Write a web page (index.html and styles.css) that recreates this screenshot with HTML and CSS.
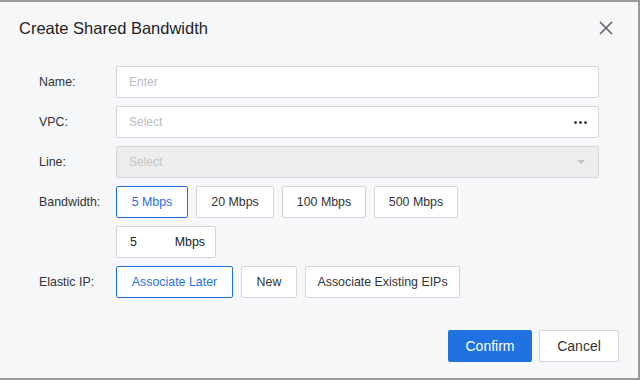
FILE: index.html
```html
<!DOCTYPE html>
<html lang="en">
<head>
    <meta charset="UTF-8">
    <title>Create Shared Bandwidth</title>
    <link rel="stylesheet" href="styles.css">
</head>
<body>
<div class="dialog">
    <div class="dialog-header">
        <h2>Create Shared Bandwidth</h2>
        <button class="close" aria-label="Close">
            <svg width="14" height="14" viewBox="0 0 14 14">
                <path d="M1 1L13 13M13 1L1 13" stroke="#5f6368" stroke-width="1.6" fill="none"/>
            </svg>
        </button>
    </div>

    <div class="form">
        <div class="row">
            <label class="label">Name:</label>
            <div class="field"><input class="input" placeholder="Enter"></div>
        </div>
        <div class="row">
            <label class="label">VPC:</label>
            <div class="field select">
                <span class="placeholder">Select</span>
                <span class="dots"><i></i><i></i><i></i></span>
            </div>
        </div>
        <div class="row">
            <label class="label">Line:</label>
            <div class="field select disabled">
                <span class="placeholder">Select</span>
                <span class="caret"></span>
            </div>
        </div>
        <div class="row">
            <label class="label">Bandwidth:</label>
            <div class="options">
                <button class="opt active w72">5 Mbps</button>
                <button class="opt w78">20 Mbps</button>
                <button class="opt w84">100 Mbps</button>
                <button class="opt w84">500 Mbps</button>
            </div>
        </div>
        <div class="row">
            <span class="label"></span>
            <div class="custom">
                <span>5</span>
                <span>Mbps</span>
            </div>
        </div>
        <div class="row">
            <label class="label">Elastic IP:</label>
            <div class="options">
                <button class="opt active w117">Associate Later</button>
                <button class="opt w56">New</button>
                <button class="opt w155">Associate Existing EIPs</button>
            </div>
        </div>
    </div>

    <div class="dialog-footer">
        <button class="btn primary">Confirm</button>
        <button class="btn">Cancel</button>
    </div>
</div>
</body>
</html>
```

FILE: styles.css
```css
body {
    margin: 0;
    background: #9a9a9a;
    font-family: "Liberation Sans", Arial, sans-serif;
    color: #333;
}

.dialog {
    box-sizing: border-box;
    width: 638px;
    height: 376px;
    margin: 2px 0 0 0;
    background: #f6f7f9;
}

.dialog-header {
    display: flex;
    justify-content: space-between;
    align-items: center;
    padding: 15px 25px 0 19px;
    height: 22px;
}
.dialog-header h2 {
    margin: 0;
    font-size: 16.5px;
    font-weight: 400;
    color: #1f1f1f;
}
.close {
    border: 0;
    background: none;
    padding: 0;
    width: 14px;
    height: 14px;
    display: flex;
}

.form {
    display: flex;
    flex-direction: column;
    gap: 8px;
    padding: 27px 39px 0 39px;
}

.row {
    display: flex;
    align-items: center;
    height: 32px;
}
.label {
    width: 77px;
    font-size: 12.4px;
    color: #333;
}

.field {
    box-sizing: border-box;
    width: 483px;
    height: 32px;
    border: 1px solid #d3d6dc;
    border-radius: 2px;
    background: #fff;
}
.input {
    box-sizing: border-box;
    width: 100%;
    height: 100%;
    border: 0;
    background: none;
    padding: 0 12px;
    font: 12px "Liberation Sans", Arial, sans-serif;
    outline: none;
}
.input::placeholder, .placeholder {
    color: #b9bcc2;
}
.select {
    display: flex;
    align-items: center;
    justify-content: space-between;
    padding: 0 11px 0 12px;
    font-size: 12px;
}
.select.disabled {
    background: #ededed;
}
.select.disabled .placeholder {
    color: #c4c6ca;
}
.dots {
    display: flex;
    gap: 2px;
}
.dots i {
    width: 3px;
    height: 3px;
    border-radius: 50%;
    background: #3e4654;
}
.caret {
    width: 0;
    height: 0;
    margin-right: 2px;
    border-left: 4px solid transparent;
    border-right: 4px solid transparent;
    border-top: 4px solid #bfc2c7;
}

.options {
    display: flex;
    gap: 8px;
}
.opt {
    box-sizing: border-box;
    height: 32px;
    padding: 0;
    border: 1px solid #d3d6dc;
    border-radius: 2px;
    background: #fff;
    font: 12.4px "Liberation Sans", Arial, sans-serif;
    color: #333;
}
.opt.active {
    border-color: #1f6fe0;
    color: #1f6fe0;
}
.w56 { width: 56px; }
.w72 { width: 72px; }
.w78 { width: 78px; }
.w84 { width: 84px; }
.w117 { width: 117px; }
.w155 { width: 155px; }

.custom {
    box-sizing: border-box;
    display: flex;
    justify-content: space-between;
    align-items: center;
    width: 100px;
    height: 32px;
    padding: 0 10px 0 13px;
    border: 1px solid #d3d6dc;
    border-radius: 2px;
    background: #fff;
    font-size: 12.4px;
    color: #222;
}

.dialog-footer {
    display: flex;
    justify-content: flex-end;
    gap: 7px;
    padding: 32px 19px 0 0;
}
.btn {
    box-sizing: border-box;
    height: 32px;
    width: 80px;
    border: 1px solid #d3d6dc;
    border-radius: 2px;
    background: #fff;
    font: 14px "Liberation Sans", Arial, sans-serif;
    color: #333;
}
.btn.primary {
    width: 84px;
    border-color: #1f72e0;
    background: #1f72e0;
    color: #fff;
}
```
